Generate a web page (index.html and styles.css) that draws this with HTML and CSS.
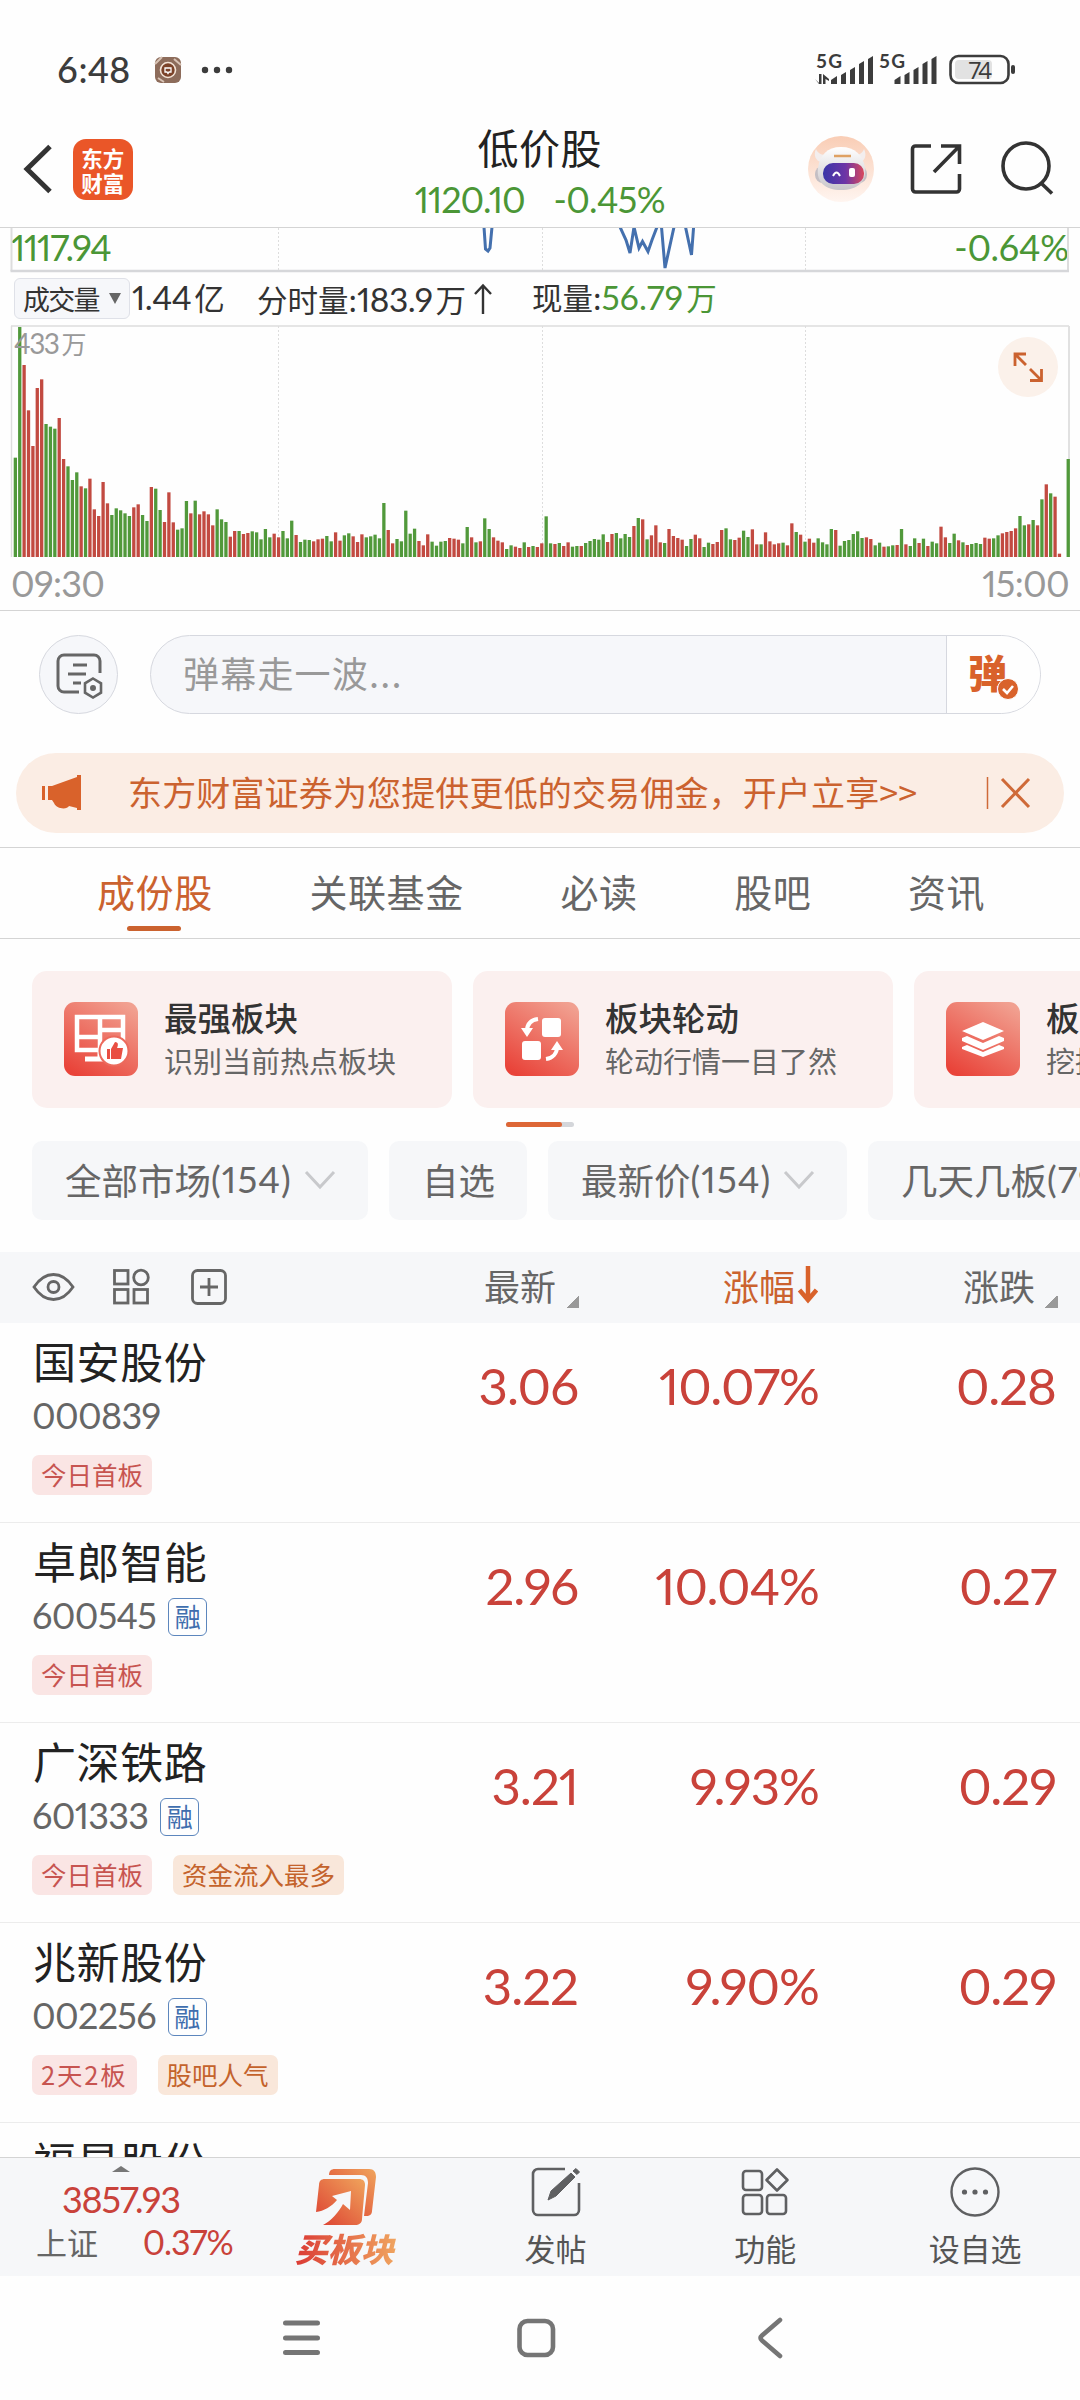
FILE: index.html
```html
<!DOCTYPE html>
<html lang="zh-CN">
<head>
<meta charset="utf-8">
<title>低价股</title>
<link rel="stylesheet" href="styles.css">
</head>
<body>
<div class="phone">
  <div class="statusbar">
    <span class="clock">6:48</span>
    <svg class="notif" width="28" height="28" viewBox="0 0 28 28"><rect x="1" y="1" width="26" height="26" rx="6" fill="#8d6c5b"/><path d="M1 8L8 1M4 22L10 26M20 3L27 9" stroke="#d8c3b5" stroke-width="2"/><circle cx="14" cy="14" r="7.5" fill="#7b4228" stroke="#f3e3d6" stroke-width="1.6"/><path d="M11 12h6v4h-2l-1 1.5-1-1.5h-2z" fill="none" stroke="#fff" stroke-width="1.3"/></svg>
    <svg class="dots" width="32" height="8" viewBox="0 0 32 8" fill="#3c3c3c"><circle cx="4" cy="4" r="3.2"/><circle cx="16" cy="4" r="3.2"/><circle cx="28" cy="4" r="3.2"/></svg>
    <svg class="radio" width="206" height="46" viewBox="-1 -10 206 46">
      <g fill="#3c3c3c">
        <text class="net" x="1" y="15" textLength="26">5G</text>
        <text class="net" x="64" y="15" textLength="26">5G</text>
        <path d="M0 26l4 4V21h2.500v10H4zM8 31V21l6 5v2l-3.500-2v5z"/>
        <path id="bars" d="M16 31v-4l6-4v8zM26 31V22l5-3v12zM35 31V17l5-3v17zM44 31V11l5-3v23zM53 31V6l5-3v28z"/>
        <use href="#bars" x="63.500"/>
      </g>
      <rect x="135.500" y="3" width="58" height="27" rx="8" fill="none" stroke="#3c3c3c" stroke-width="2.600"/>
      <rect x="140" y="7" width="37" height="19" rx="4" fill="#e2e2e2"/>
      <text class="batt" x="153" y="25.500" textLength="24" fill="#3c3c3c">74</text>
      <rect x="196" y="12" width="4" height="9" rx="2" fill="#3c3c3c"/>
    </svg>
  </div>

  <header class="topbar">
    <svg class="back" width="32" height="52" viewBox="0 0 32 52"><path d="M28 3.500L5 26l23 22.500" fill="none" stroke="#333" stroke-width="5"/></svg>
    <div class="logo"><span>东方</span><span>财富</span></div>
    <div class="heading">
      <h1>低价股</h1>
      <p><span class="num idx">1120.10</span><span class="num pct">-0.45%</span></p>
    </div>
    <svg class="robot" width="68" height="68" viewBox="0 0 68 68">
      <defs>
        <linearGradient id="sky" x1="0" y1="0" x2="0" y2="1"><stop offset="0" stop-color="#f9cdb5"/><stop offset="1" stop-color="#fff5f0"/></linearGradient>
        <linearGradient id="visor"><stop offset="0" stop-color="#3a36a8"/><stop offset=".55" stop-color="#6d35a6"/><stop offset="1" stop-color="#d9495c"/></linearGradient>
        <linearGradient id="shell" x1="0" y1="0" x2="0" y2="1"><stop offset="0" stop-color="#fff"/><stop offset="1" stop-color="#c9c6ca"/></linearGradient>
      </defs>
      <circle cx="34" cy="34" r="33" fill="url(#sky)"/>
      <path d="M9 14c-3 6 0 12 5 13l6-7c-5 0-9-1-11-6zM57 14c3 6 1 12-4 13l-7-7c6 0 9-1 11-6z" fill="#f3eeee"/>
      <rect x="8" y="31" width="52" height="17" rx="8" fill="#c4bfc4"/>
      <path d="M34 12c14 0 22 8 24 21 2 14-8 22-24 22S9 47 11 33c2-13 9-21 23-21z" fill="url(#shell)"/>
      <rect x="16" y="28" width="41" height="21" rx="10" fill="url(#visor)"/>
      <path d="M27 21h17" stroke="#dfa163" stroke-width="2.500"/>
      <path d="M26 41q3.500-7 7 0" fill="none" stroke="#fff" stroke-width="2"/><rect x="42" y="33" width="6" height="9" rx="2" fill="#fff"/>
    </svg>
    <svg class="share" width="54" height="54" viewBox="0 0 54 54" fill="none" stroke="#333" stroke-width="3.600"><path d="M22 4H6.500a3 3 0 0 0-3 3v40a3 3 0 0 0 3 3h41a3 3 0 0 0 3-3V32M32 4h18.500v18M50 4.500L25 30"/></svg>
    <svg class="find" width="56" height="56" viewBox="0 0 56 56" fill="none" stroke="#333" stroke-width="3.600"><circle cx="26" cy="25" r="23"/><path d="M41 42l11 10.500"/></svg>
  </header>

  <section class="price">
    <span class="num low">1117.94</span><span class="num lowpct">-0.64%</span>
    <svg class="overlay" width="1080" height="45" viewBox="0 0 1080 45" fill="none">
      <path d="M11.500 0V43M1068 0V43" stroke="#ddd" stroke-width="2"/><path d="M10.500 43H1069" stroke="#d6d7da" stroke-width="2.400"/>
      <path d="M278.500 0V43M542.500 0V43M805.500 0V43" stroke="#ddd" stroke-dasharray="2 2"/>
      <path d="M484 -1L485.500 21L488 23L490 20L492 -1M620 -1L626 12L630 25L634 -1L639 20L642.500 13.500L648 23.500L652 12L657 -1M661.500 -1L665 40L674 -1M685.500 -1L691.500 27L693.600 -1" stroke="#4470ae" stroke-width="3"/>
    </svg>
  </section>

  <section class="volinfo">
    <span class="pick">成交量<i class="caret"></i></span>
    <span class="v1"><b class="num">1.44</b>亿</span>
    <span class="v2">分时量:<b class="num">183.9</b>万<svg class="up" width="20" height="32" viewBox="0 0 20 32" fill="none" stroke="#333" stroke-width="2.400"><path d="M10 31V3M2 11l8-8.500 8 8.500"/></svg></span>
    <span class="v3">现量:<em><b class="num">56.79</b>万</em></span>
  </section>

  <section class="volume">
    <svg id="volume-chart" width="1080" height="233" viewBox="0 0 1080 233">
      <path d="M11.500 1V232M11 1H1069" stroke="#ddd" fill="none" stroke-width="1.400"/><path d="M1069 1V232" stroke="#e1e1e1" stroke-width="2"/>
      <path d="M278.500 1V232M542.500 1V232M805.500 1V232" stroke="#ddd" stroke-dasharray="2 2"/>
      <g id="volume-bars"></g>
    </svg>
    <span class="max"><b class="num">433</b>万</span>
    <svg class="expand" width="60" height="60" viewBox="0 0 60 60"><circle cx="30" cy="30" r="30" fill="#fbf1ea"/><path d="M28 17H17v12M17 17l11 11M32 43.500h11.500V32M43 43L32 32" fill="none" stroke="#cb622f" stroke-width="2.800"/></svg>
  </section>
  <div class="times num"><span>09:30</span><span>15:00</span></div>

  <section class="chat">
    <div class="round"><svg width="52" height="50" viewBox="0 0 52 50" fill="none" stroke="#666" stroke-width="3"><path d="M26 42H11a6 6 0 0 1-6-6V11a6 6 0 0 1 6-6h30a6 6 0 0 1 6 6v12M20 15h14M15 24h18M20 33h8"/><path d="M40 28.500l8 4.800v9.400l-8 4.800-8-4.800v-9.400z" stroke-width="2.600"/><circle cx="40" cy="38" r="1.500"/></svg></div>
    <div class="field"><span class="hint">弹幕走一波...</span><span class="dan">弹<svg width="22" height="22" viewBox="0 0 22 22"><circle cx="11" cy="11" r="10.500" fill="#d9622b" stroke="#fff"/><path d="M6 11l4 4 6-7" fill="none" stroke="#fff" stroke-width="2.600"/></svg></span></div>
  </section>

  <section class="promo">
    <svg class="horn" width="42" height="36" viewBox="0 0 42 36" fill="#d9622b"><path d="M1 11h3v14H1zM7 11h4L36 2V0h4v35h-4v-2l-8-2c-2 4-13 3-15-3L11 25H7z"/></svg>
    <span class="promo-text">东方财富证券为您提供更低的交易佣金，开户立享&gt;&gt;</span>
    <svg class="close" width="46" height="34" viewBox="0 0 46 34" stroke="#cf6a38" fill="none"><path d="M1.500 1v32" stroke-width="1.500"/><path d="M16 3l27 28M43 3L16 31" stroke-width="3"/></svg>
  </section>

  <nav class="tabs">
    <a class="on">成份股</a><a>关联基金</a><a>必读</a><a>股吧</a><a>资讯</a>
  </nav>

  <section class="cards">
    <div class="card"><svg width="74" height="74" viewBox="0 0 74 74"><defs><linearGradient id="red" x1=".2" y1="1" x2=".8" y2="0"><stop offset="0" stop-color="#e94339"/><stop offset="1" stop-color="#f1a090"/></linearGradient></defs><rect width="74" height="74" rx="11" fill="url(#red)"/><path d="M13 15h46v33H13zM36 15v33M13 35h23M36 28h23" fill="none" stroke="#fff" stroke-width="4.500" /><path d="M21 57h22M36 48v9" stroke="#fff" stroke-width="5"/><circle cx="50" cy="49" r="14.500" fill="#fff" stroke="#ec6a5c" stroke-width="2"/><path d="M43 47h3v10h-3zM47 47l4-7c4 0 3 4 2 6h6l-2 11H47z" fill="#e94f43"/></svg><div><h2>最强板块</h2><p>识别当前热点板块</p></div></div>
    <div class="card"><svg width="74" height="74" viewBox="0 0 74 74"><rect width="74" height="74" rx="11" fill="url(#red)"/><rect x="37" y="16" width="19" height="19" rx="3" fill="#fff"/><rect x="17" y="39" width="19" height="19" rx="3" fill="#fff"/><path d="M33 17c-7 1-11 5-11 12M41 57c7-1 11-6 11-12" fill="none" stroke="#fff" stroke-width="4"/><path d="M16 26l6 9 6-9zM46 48l6-9 6 9z" fill="#fff"/></svg><div><h2>板块轮动</h2><p>轮动行情一目了然</p></div></div>
    <div class="card"><svg width="74" height="74" viewBox="0 0 74 74"><rect width="74" height="74" rx="11" fill="url(#red)"/><path d="M37 20l21 9-21 9-21-9zM16 36l5-2 16 7 16-7 5 2v3l-21 9-21-9zM16 45l5-2 16 7 16-7 5 2v2l-21 8-21-8z" fill="#fff"/></svg><div><h2>板块掘金</h2><p>挖掘板块投资机会</p></div></div>
  </section>
  <div class="pager"><i></i></div>

  <section class="filters">
    <span class="market">全部市场<b class="num">(154)</b><svg width="32" height="20" viewBox="0 0 32 20"><path d="M2 2l14 15L30 2" fill="none" stroke="#c8c9cc" stroke-width="3"/></svg></span>
    <span class="mine">自选</span>
    <span class="latest">最新价<b class="num">(154)</b><svg width="32" height="20" viewBox="0 0 32 20"><path d="M2 2l14 15L30 2" fill="none" stroke="#c8c9cc" stroke-width="3"/></svg></span>
    <span>几天几板<b class="num">(79)</b></span>
  </section>

  <div class="thead">
    <svg class="tools" width="200" height="40" viewBox="0 0 200 40" fill="none" stroke="#666" stroke-width="2.800"><path d="M2 20C8 11 15 7.500 21.500 7.500S35 11 41 20C35 29 28 32.500 21.500 32.500S8 29 2 20z"/><circle cx="21.500" cy="20" r="5.500"/><rect x="82.500" y="3.500" width="13.500" height="13.500"/><circle cx="109" cy="10.500" r="7.300"/><rect x="82.500" y="22.500" width="13.500" height="13.500"/><rect x="102" y="22.500" width="13.500" height="13.500"/><rect x="160.500" y="3.500" width="33" height="33" rx="5"/><path d="M177 11v18M168 20h18"/></svg>
    <span class="c1">最新<i class="corner"></i></span>
    <span class="c2 hot">涨幅<svg width="22" height="38" viewBox="0 0 22 38"><path d="M12 0v33M3.500 24L12 34l8.500-10" fill="none" stroke="#d9622b" stroke-width="4.500"/></svg></span>
    <span class="c3">涨跌<i class="corner"></i></span>
  </div>

  <main class="stocks">
    <article><div class="id"><h3>国安股份</h3><p><b class="num">000839</b></p><div class="tags"><u>今日首板</u></div></div><b class="num c1">3.06</b><b class="num c2">10.07%</b><b class="num c3">0.28</b></article>
    <article><div class="id"><h3>卓郎智能</h3><p><b class="num">600545</b><s>融</s></p><div class="tags"><u>今日首板</u></div></div><b class="num c1">2.96</b><b class="num c2">10.04%</b><b class="num c3">0.27</b></article>
    <article><div class="id"><h3>广深铁路</h3><p><b class="num">601333</b><s>融</s></p><div class="tags"><u>今日首板</u><u class="or">资金流入最多</u></div></div><b class="num c1">3.21</b><b class="num c2">9.93%</b><b class="num c3">0.29</b></article>
    <article><div class="id"><h3>兆新股份</h3><p><b class="num">002256</b><s>融</s></p><div class="tags"><u class="streak">2天2板</u><u class="or">股吧人气</u></div></div><b class="num c1">3.22</b><b class="num c2">9.90%</b><b class="num c3">0.29</b></article>
    <article><div class="id"><h3>福星股份</h3></div></article>
  </main>

  <footer class="dock">
    <div class="index"><i class="tri"></i><b class="num big">3857.93</b><p><span>上证</span><b class="num">0.37%</b></p></div>
    <div class="item buy"><svg width="62" height="60" viewBox="0 0 62 60"><defs><linearGradient id="fire" x1="0" y1="1" x2="1" y2="0"><stop offset="0" stop-color="#dc3f31"/><stop offset="1" stop-color="#f0a45c"/></linearGradient></defs><path d="M14 8c0-4 2-6 6-6h34c5 0 7 3 7 8l-4 34c0 3-2 5-6 5h-2l4-33c0-5-2-8-7-8z" fill="url(#fire)"/><path d="M10 12h34c4 0 6 2 6 6l-3 34c0 4-3 6-7 6H8c8-4 16-13 20-21l7 6 1-19-19 5 5 4C16 40 9 44 1 45l3-27c0-4 2-6 6-6z" fill="url(#fire)"/></svg><span>买板块</span></div>
    <div class="item i2"><svg width="50" height="50" viewBox="0 0 50 50" fill="none" stroke="#5f6062" stroke-width="2.600"><path d="M34 2H7a5 5 0 0 0-5 5v36a5 5 0 0 0 5 5h36a5 5 0 0 0 5-5V16"/><path d="M17 33l3-9L40 6l4 4-19 19zM42 4l3-2.500 3.500 3.500-2.500 2.500z" fill="#5f6062" stroke-width="1"/></svg><span>发帖</span></div>
    <div class="item i3"><svg width="50" height="50" viewBox="0 0 50 50" fill="none" stroke="#5f6062" stroke-width="2.600"><rect x="3" y="4" width="19" height="19" rx="3"/><path d="M37 2.500L47.500 13 37 23.500 26.500 13z" stroke-linejoin="round"/><rect x="3" y="28" width="19" height="19" rx="3"/><rect x="27" y="28" width="19" height="19" rx="3"/></svg><span>功能</span></div>
    <div class="item i4"><svg width="50" height="50" viewBox="0 0 50 50" fill="none" stroke="#5f6062" stroke-width="2.400"><circle cx="25" cy="25" r="23.500"/><g fill="#5f6062" stroke="none"><circle cx="14.500" cy="25" r="2.600"/><circle cx="25" cy="25" r="2.600"/><circle cx="35.500" cy="25" r="2.600"/></g></svg><span>设自选</span></div>
  </footer>

  <div class="sysnav">
    <svg width="1080" height="44" viewBox="0 0 1080 44" fill="none" stroke="#757575" stroke-width="5" stroke-linecap="round"><path d="M285.500 7h32M285.500 22h32M285.500 36.500h32"/><rect x="519.500" y="5" width="33.500" height="34" rx="8" stroke-width="4.600"/><path d="M780 4L762 19.500q-3 2.500 0 5L780 40" stroke-width="4.600"/></svg>
  </div>
</div>
<script src="volume.js"></script>
</body>
</html>
```
FILE: styles.css
```css
* { box-sizing: border-box; margin: 0; padding: 0; }
body { width: 1080px; height: 2400px; overflow: hidden; background: #fefefe; color: #333; font-family: "Noto Sans CJK SC", sans-serif; }
svg { display: block; flex: none; }
h1, h2, h3, b, em, i, s, u { font-weight: 400; font-style: normal; text-decoration: none; }
.num { font-family: Lato, "Noto Sans CJK SC", sans-serif; font-variant-numeric: proportional-nums; }
.phone { height: 2400px; display: flex; flex-direction: column; overflow: hidden; }
.phone > * { flex: none; }

.statusbar { height: 110px; display: flex; align-items: center; padding: 30px 60px 0 57px; color: #3c3c3c; }
.clock { font: 500 36px/40px Lato, sans-serif; width: 97px; height: 42px; letter-spacing: 0.5px; }
.dots { margin-left: 19px; }
.radio { margin-left: auto; margin-top: -9px; }
.net { font: 700 19px Lato, sans-serif; }
.batt { font: 500 24px "Open Sans", sans-serif; }

.topbar { height: 118px; display: flex; align-items: flex-start; border-bottom: 1.500px solid #d4d4d4; padding: 28px 24px 0 22px; }
.back { margin-top: 5px; }
.logo { width: 60px; height: 61px; margin: 1px 0 0 19px; border-radius: 13px; background: #ea5628; color: #fff; display: flex; flex-direction: column; align-items: center; justify-content: center; font-weight: 700; font-size: 21.500px; line-height: 25px; }
.heading { width: 260px; margin: -22px 0 0 278px; text-align: center; }
.heading h1 { font-size: 41px; line-height: 60px; letter-spacing: .5px; color: #222; }
.heading p { display: flex; justify-content: space-between; color: #4b9636; font-size: 36px; line-height: 40px; margin-top: 3px; padding: 0 4px; }
.idx { letter-spacing: -1px; }
.pct { letter-spacing: -.6px; }
.robot { margin-left: 138px; margin-top: -3px; }
.share { margin: 4px 0 0 34px; }
.find { margin: 3px 0 0 37px; }

.price { height: 44px; position: relative; display: flex; justify-content: space-between; padding: 0 11px 0 11px; color: #4b9636; font-size: 36px; line-height: 39px; }
.low { letter-spacing: -1.200px; }
.lowpct { letter-spacing: -.2px; }
.overlay { position: absolute; left: 0; top: 0; }

.volinfo { height: 53px; display: flex; align-items: center; padding: 0 0 0 14px; font-size: 30.500px; line-height: 44px; white-space: nowrap; }
.volinfo > span:not(.pick) { height: 47px; }
.volinfo .num { font-size: 33.500px; letter-spacing: -.5px; margin-right: 3px; }
.pick { width: 116px; height: 41px; border: 1.500px solid #dfe1e8; border-radius: 6px; background: #f6f7fa; font-size: 27px; letter-spacing: -1.800px; padding-left: 8px; display: flex; align-items: center; }
.caret { border: 6px solid transparent; border-top: 11px solid #666; border-bottom: 0; margin-left: 10px; }
.v1 { width: 127px; padding-left: 2px; }
.v2 { width: 275px; display: flex; align-items: center; }
.up { margin-left: 7px; }
.v3 em { color: #4b9636; }
.v3 em .num { letter-spacing: .2px; }

.volume { height: 233px; position: relative; }
.max { position: absolute; left: 14px; top: 0; font-size: 25px; line-height: 36px; color: #999; }
.max .num { font-size: 28px; letter-spacing: -1.500px; margin-right: 3px; }
.expand { position: absolute; left: 998px; top: 12px; }
.times { height: 53px; display: flex; justify-content: space-between; border-bottom: 1.500px solid #d4d4d4; padding: 0 11px 0 11px; font-size: 36px; line-height: 51px; letter-spacing: -.7px; color: #999; }

.chat { height: 142px; display: flex; padding: 24px 39px 0; }
.round { width: 79px; height: 79px; border: 1.500px solid #d6d8df; border-radius: 50%; background: #f6f7fa; display: flex; align-items: center; justify-content: center; }
.field { margin-left: 32px; width: 891px; height: 79px; border: 1.500px solid #d6d8df; border-radius: 40px; background: #f6f7fa; display: flex; overflow: hidden; }
.hint { width: 796px; padding-left: 32px; font-size: 36px; line-height: 73px; letter-spacing: 1.200px; color: #999; border-right: 1.500px solid #d6d8df; }
.dan { flex: 1; background: #fefefe; color: #d9622b; font-weight: 900; font-size: 39px; line-height: 71px; padding-left: 21px; position: relative; }
.dan svg { position: absolute; left: 50px; top: 42px; }

.promo { height: 80px; margin: 0 16px; border-radius: 40px; background: #fbede4; display: flex; align-items: center; padding-left: 25px; color: #cb622f; }
.promo-text { flex: none; width: 903px; padding-left: 45px; font-size: 34px; line-height: 76px; padding-bottom: 2px; letter-spacing: .15px; white-space: nowrap; }

.tabs { height: 92px; margin-top: 14px; border: solid #d4d4d4; border-width: 1.500px 0; display: flex; gap: 96.600px; padding-left: 97px; color: #666; font-size: 38px; line-height: 86px; letter-spacing: .6px; }
.tabs a { flex: none; white-space: nowrap; }
.tabs .on { color: #cb622f; position: relative; }
.tabs .on::after { content: ""; position: absolute; left: 30px; bottom: 7px; width: 54px; height: 5px; border-radius: 3px; background: #cb622f; }

.cards { height: 169px; display: flex; gap: 21px; padding: 32px 0 0 32px; }
.card { flex: none; width: 420px; height: 137px; border-radius: 15px; background: #fbf0ef; display: flex; padding: 31px 0 0 32px; }
.card div { margin: -8px 0 0 26px; white-space: nowrap; }
.card h2 { font-weight: 500; font-size: 33.500px; line-height: 46px; }
.card p { font-size: 29px; line-height: 40px; color: #666; }
.pager { width: 68px; height: 5px; margin: 14px 0 0 506px; border-radius: 3px; background: #d4d6da; }
.pager i { display: block; width: 56px; height: 5px; border-radius: 3px; background: #dd6636; }

.filters { display: flex; gap: 21px; padding: 14px 0 0 32px; height: 125px; }
.filters span { flex: none; height: 79px; border-radius: 10px; background: #f6f7f9; display: flex; align-items: center; padding: 0 32px 3px 33px; font-size: 36.500px; color: #666; white-space: nowrap; }
.filters .num { letter-spacing: 1.100px; }
.filters .market { width: 336px; }
.filters .mine { width: 138px; }
.filters .latest { width: 299px; }
.filters span svg { margin: 2px 0 0 auto; }

.thead { height: 71px; background: #f6f7f9; display: flex; align-items: center; padding-left: 32px; color: #666; font-size: 36px; }
.tools { margin-top: -2px; }
.thead span { display: flex; align-items: center; justify-content: flex-end; height: 71px; padding-bottom: 5px; line-height: 66px; }
.thead .c1 { width: 347px; }
.thead .c2 { width: 239px; }
.thead .c3 { width: 240px; }
.thead .hot { color: #cb622f; }
.thead .hot svg { margin-left: 1px; }
.corner { width: 13px; height: 13px; margin: 32px 0 0 10px; background: linear-gradient(135deg, transparent 50%, #999 50%); }

.stocks { height: 834px; overflow: hidden; }
article { height: 200px; border-bottom: 1.500px solid #ececec; display: flex; padding-left: 32px; }
.id { width: 330px; }
h3 { font-size: 43px; line-height: 60px; margin: 7px 0 3px 1px; letter-spacing: .6px; color: #222; white-space: nowrap; }
.id p { display: flex; align-items: center; height: 44px; color: #666; font-size: 36px; }
.id p b { letter-spacing: -.7px; }
.id s { width: 39px; height: 38px; margin: 3px 0 0 12px; border: 1.500px solid #5c86bd; border-radius: 6px; color: #3f6eae; font-size: 26px; line-height: 33px; text-align: center; }
.tags { display: flex; gap: 21px; margin-top: 18px; }
.tags u { height: 40px; border-radius: 7px; background: #fae5e4; color: #c75450; font-size: 25.500px; line-height: 38px; padding: 0 9px; white-space: nowrap; }
.tags .streak { letter-spacing: 1.800px; }
.tags .or { background: #f9e7da; color: #c4632c; }
article > b { font-size: 51px; line-height: 60px; margin-top: 33px; color: #c9423a; text-align: right; letter-spacing: -1px; }
article .c1 { width: 216px; }
article .c2 { width: 241px; }
article .c3 { width: 237px; }

.dock { height: 119px; background: #f6f7f9; border-top: 1.500px solid #d4d4d4; display: flex; }
.index { width: 242px; text-align: center; color: #c9423a; }
.tri { display: block; margin: 8px auto 0; width: 0; border: 9px solid transparent; border-top: 0; border-bottom: 6px solid #777; }
.big { display: block; font-size: 36px; line-height: 44px; margin-top: 5px; letter-spacing: -1.200px; }
.index p { display: flex; justify-content: space-between; padding: 0 9px 0 36px; font-size: 34px; line-height: 42px; letter-spacing: -1px; }
.index span { color: #666; font-size: 31px; letter-spacing: 0; }
.item { width: 210px; display: flex; flex-direction: column; align-items: center; color: #555; font-size: 31px; line-height: 40px; padding-top: 9px; }
.item svg { margin-bottom: 11px; }
.buy { width: 209px; }
.buy svg { margin-bottom: 1px; }
.buy span { font-weight: 900; font-style: italic; font-size: 33px; padding-right: 4px; background: linear-gradient(90deg, #db3b35, #f0a660); background-clip: text; color: transparent; }

.sysnav { height: 124px; padding-top: 40px; }
```
FILE: volume.js
```js
// One entry per minute: direction (g = down, r = up) and bar top, in thirds of a pixel.
const ticks = `g443 g51 r165 r301 r408 r234 r208 g342 g350 g356 r324 r447 g469 g510 g487 r529 g535 r506 r598 r618
r516 r580 g615 g595 g601 g610 g618 r592 r583 g615 g633 r531 g536 g600 r636 r547 r637 g659 g655 g573
r610 g572 r613 r604 r613 r646 g598 g628 g636 r680 r663 g663 r672 r669 g664 g667 g688 g657 g682 r671
r682 g663 g685 g632 r675 g696 g689 g690 r694 r688 r686 g678 g694 r667 r692 g676 g670 r679 r696 r673
g682 g679 g674 g685 g579 r660 r700 g687 g694 g602 g671 g656 r693 r706 r673 g695 g707 g695 g693 r684
r686 r689 g700 g651 r682 g697 r694 g625 g657 r682 r692 r697 g717 g706 r710 r714 g697 r711 g708 r711
r700 g619 g700 r702 g699 r708 r697 g710 g708 r708 g699 g693 g687 g689 g673 r696 r672 g669 g685 g672
g681 r648 g624 r628 g688 r676 r646 r697 g699 r657 r678 r684 r689 g708 g687 r674 r685 g711 g698 r702
r696 r660 g655 g688 r690 r683 g662 g681 r658 r703 g703 r667 r694 r703 r700 g698 r706 r640 g666 r674
g695 r686 r698 g685 g697 g703 g657 r660 g707 g693 g690 g672 g664 g684 r682 r687 g706 g698 r710 g709
g706 r705 g657 r703 g708 g685 r699 g686 r708 g695 g700 r650 r682 g699 g671 r691 g697 r705 g702 g699
g702 r683 r686 g685 g676 r670 r666 r663 r655 g618 g646 r643 g630 r646 g568 r523 g550 r560 r731 g741 g447`.split(/\s+/);
const layer = document.getElementById('volume-bars');
ticks.forEach((t, i) => {
  const h = (741 - Number(t.slice(1))) / 3;
  const r = document.createElementNS('http://www.w3.org/2000/svg', 'rect');
  r.setAttribute('x', (13.7 + i * 4.387).toFixed(2));
  r.setAttribute('y', (232 - h).toFixed(2));
  r.setAttribute('width', 3.3);
  r.setAttribute('height', h.toFixed(2));
  r.setAttribute('fill', t[0] === 'g' ? '#51993b' : '#c24a41');
  layer.appendChild(r);
});
```
